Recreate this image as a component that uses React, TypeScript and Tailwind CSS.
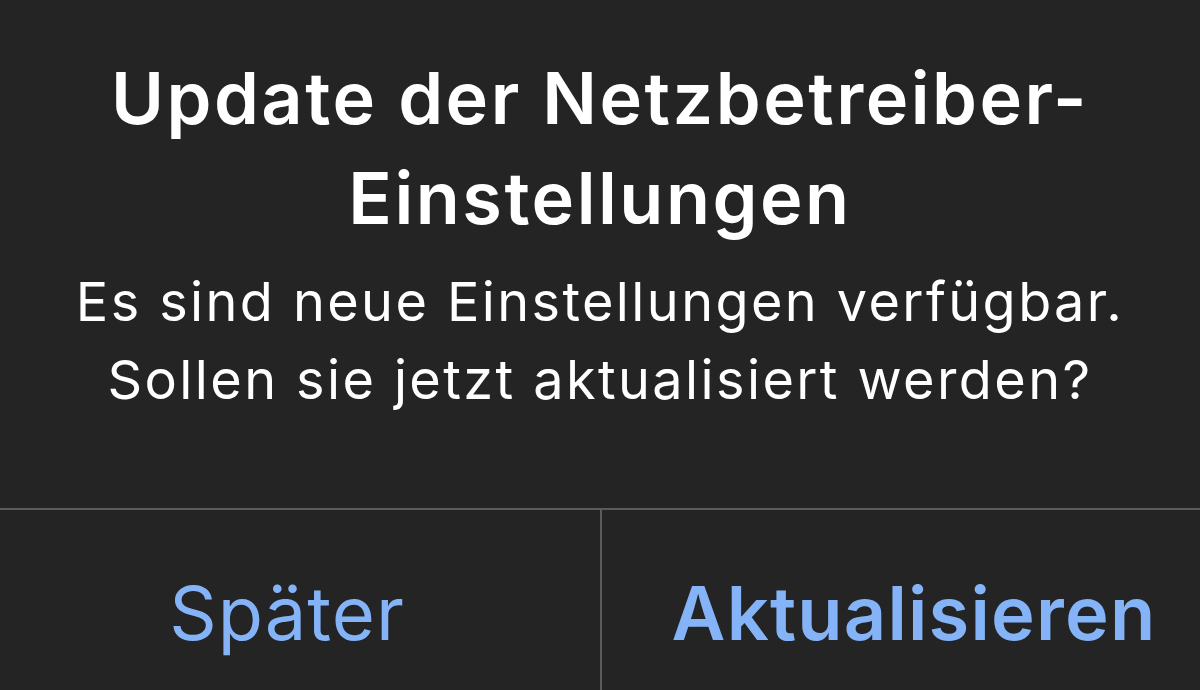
import React from 'react';

const App: React.FC = () => {
  return (
    <div
      className="w-[1200px] h-[690px] overflow-hidden bg-[#242424] text-white flex flex-col"
      style={{ fontFamily: 'Inter, "Noto Sans", sans-serif' }}
    >
      {/* Alert body */}
      <div className="flex flex-col items-center text-center pt-[48px]">
        <h1 className="text-[72px] leading-[100px] font-semibold tracking-[2.5px] whitespace-nowrap">
          Update der Netzbetreiber-
          <br />
          Einstellungen
        </h1>
        <p className="mt-[15px] text-[54px] leading-[78px] font-normal tracking-[2.4px] whitespace-nowrap">
          Es sind neue Einstellungen verfügbar.
          <br />
          Sollen sie jetzt aktualisiert werden?
        </p>
      </div>

      {/* Actions */}
      <div className="mt-auto border-t-2 border-[#5b5b5b] flex h-[182px]">
        <button className="w-[602px] shrink-0 flex justify-center pt-[66px] pr-[26px] text-[74px] leading-none tracking-[1px] text-[#84b3f7] border-r-2 border-[#5b5b5b]">
          Später
        </button>
        <button className="flex-1 flex justify-center pt-[66px] pl-[26px] text-[74px] leading-none font-semibold tracking-[1.2px] text-[#84b3f7]">
          Aktualisieren
        </button>
      </div>
    </div>
  );
};

export default App;
